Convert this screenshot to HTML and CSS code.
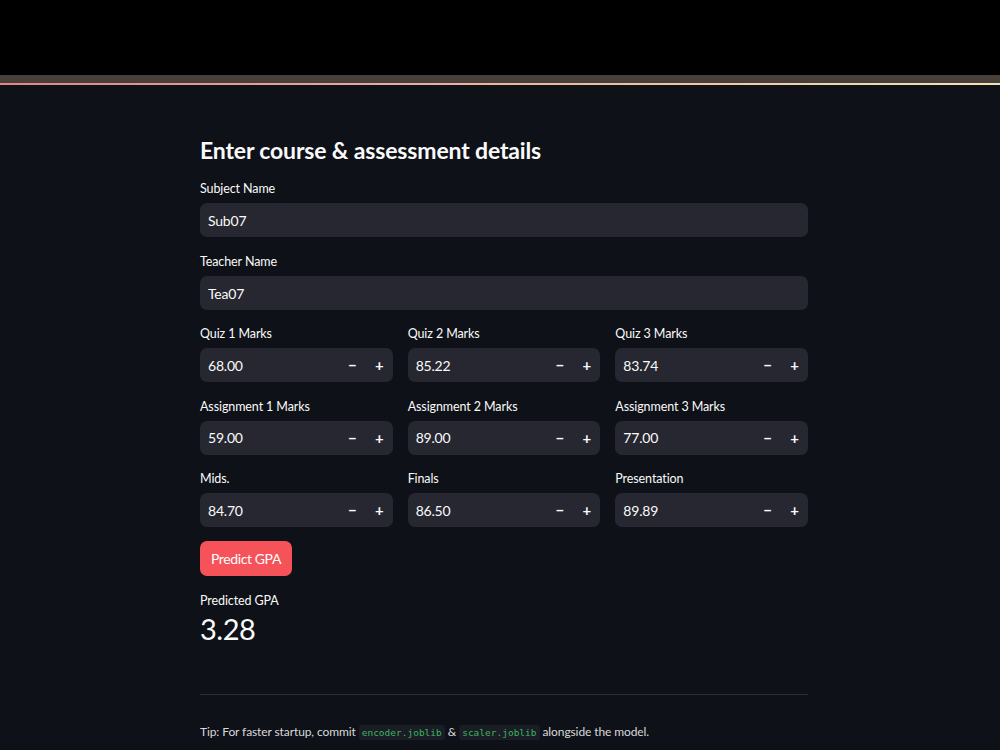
FILE: index.html
```html
<!DOCTYPE html>
<html lang="en">
<head>
    <meta charset="UTF-8">
    <title>GPA Predictor</title>
    <link rel="stylesheet" href="styles.css">
</head>
<body>
    <div class="topbar"></div>
    <div class="header">
        <div class="header-line"></div>
    </div>

    <main class="container">
        <h2>Enter course &amp; assessment details</h2>

        <div class="field">
            <label>Subject Name</label>
            <div class="text-input">Sub07</div>
        </div>
        <div class="field">
            <label>Teacher Name</label>
            <div class="text-input">Tea07</div>
        </div>

        <div class="grid">
            <div class="field">
                <label>Quiz 1 Marks</label>
                <div class="number-input"><span class="value">68.00</span><span class="step">&minus;</span><span class="step">+</span></div>
            </div>
            <div class="field">
                <label>Quiz 2 Marks</label>
                <div class="number-input"><span class="value">85.22</span><span class="step">&minus;</span><span class="step">+</span></div>
            </div>
            <div class="field">
                <label>Quiz 3 Marks</label>
                <div class="number-input"><span class="value">83.74</span><span class="step">&minus;</span><span class="step">+</span></div>
            </div>
            <div class="field">
                <label>Assignment 1 Marks</label>
                <div class="number-input"><span class="value">59.00</span><span class="step">&minus;</span><span class="step">+</span></div>
            </div>
            <div class="field">
                <label>Assignment 2 Marks</label>
                <div class="number-input"><span class="value">89.00</span><span class="step">&minus;</span><span class="step">+</span></div>
            </div>
            <div class="field">
                <label>Assignment 3 Marks</label>
                <div class="number-input"><span class="value">77.00</span><span class="step">&minus;</span><span class="step">+</span></div>
            </div>
            <div class="field">
                <label>Mids.</label>
                <div class="number-input"><span class="value">84.70</span><span class="step">&minus;</span><span class="step">+</span></div>
            </div>
            <div class="field">
                <label>Finals</label>
                <div class="number-input"><span class="value">86.50</span><span class="step">&minus;</span><span class="step">+</span></div>
            </div>
            <div class="field">
                <label>Presentation</label>
                <div class="number-input"><span class="value">89.89</span><span class="step">&minus;</span><span class="step">+</span></div>
            </div>
        </div>

        <button class="predict">Predict GPA</button>

        <div class="metric">
            <div class="metric-label">Predicted GPA</div>
            <div class="metric-value">3.28</div>
        </div>

        <hr>

        <p class="tip">Tip: For faster startup, commit <code>encoder.joblib</code> &amp; <code>scaler.joblib</code> alongside the model.</p>
    </main>
</body>
</html>
```

FILE: styles.css
```css
:root {
    --bg: #0e1117;
    --input-bg: #262730;
    --text: #fafafa;
}

body {
    margin: 0;
    background: var(--bg);
    color: var(--text);
    font-family: Lato, 'Noto Sans', sans-serif;
    height: 750px;
    overflow: hidden;
}

.topbar {
    height: 75px;
    background: #000;
}

.header {
    height: 8px;
    background: #47403a;
    position: relative;
}

.header-line {
    position: absolute;
    left: 0;
    right: 0;
    bottom: -2px;
    height: 2px;
    background: linear-gradient(90deg, #e4848c 0%, #eab7a0 50%, #f2e4b8 100%);
}

.container {
    width: 608px;
    margin-left: 200px;
    padding-top: 50px;
}

h2 {
    font-size: 23px;
    font-weight: 700;
    letter-spacing: -0.15px;
    margin: 0 0 14px;
    line-height: 34px;
}

.field {
    display: flex;
    flex-direction: column;
    margin-bottom: 17px;
}

label {
    font-size: 12.5px;
    line-height: 16px;
    margin-bottom: 6px;
    letter-spacing: -0.1px;
}

.text-input,
.number-input {
    background: var(--input-bg);
    border-radius: 7px;
    height: 34px;
    display: flex;
    align-items: center;
    padding-left: 8px;
    font-size: 14px;
    letter-spacing: -0.2px;
    box-sizing: border-box;
}

.grid {
    display: grid;
    grid-template-columns: repeat(3, 1fr);
    column-gap: 15px;
    margin-top: -1px;
}

.grid .field {
    margin-bottom: 16.5px;
}

.number-input .value {
    flex: 1;
}

.step {
    width: 27px;
    text-align: center;
    font-weight: 700;
    font-size: 15px;
}

.predict {
    background: #f5525a;
    color: #fff;
    border: none;
    border-radius: 7px;
    font-family: inherit;
    font-size: 14px;
    letter-spacing: -0.4px;
    height: 35px;
    padding: 0 11px;
    margin-top: -3px;
}

.metric {
    margin-top: 17px;
}

.metric-label {
    font-size: 12.5px;
    line-height: 16px;
    letter-spacing: -0.1px;
}

.metric-value {
    font-size: 29px;
    line-height: 38px;
    letter-spacing: -0.5px;
    margin-top: 1px;
}

hr {
    border: none;
    border-top: 1px solid #2b2e36;
    margin: 46px 0 0;
}

.tip {
    font-size: 12px;
    letter-spacing: -0.1px;
    color: #d8d9dc;
    margin: 29px 0 0;
}

code {
    font-family: 'DejaVu Sans Mono', monospace;
    font-size: 9.5px;
    letter-spacing: 0;
    color: #3ab561;
    background: #1a1d24;
    padding: 2px 3px;
    border-radius: 3px;
}
```
